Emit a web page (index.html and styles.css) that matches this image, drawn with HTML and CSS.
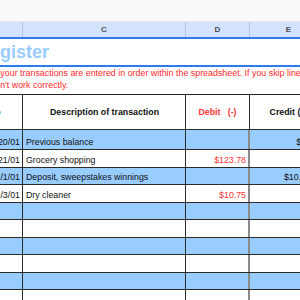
FILE: index.html
```html
<!DOCTYPE html>
<html>
<head>
<meta charset="utf-8">
<link rel="stylesheet" href="styles.css">
</head>
<body>
<div class="sheet">
  <div class="topbar"></div>
  <div class="colheads">
    <div class="ch">B</div>
    <div class="ch">C</div>
    <div class="ch">D</div>
    <div class="ch">E</div>
  </div>
  <div class="title-row"><span class="title">Register</span></div>
  <div class="note">
    <div class="note-line l1">Be sure your transactions are entered in order within the spreadsheet. If you skip lines, formulas</div>
    <div class="note-line l2">won't work correctly.</div>
  </div>
  <div class="table">
    <div class="row head">
      <div class="cell c-date">Date</div>
      <div class="cell c-desc">Description of transaction</div>
      <div class="cell c-debit"><span class="red">Debit&nbsp;&nbsp;&nbsp;(-)</span></div>
      <div class="cell c-credit">Credit (+)</div>
    </div>
    <div class="row alt first">
      <div class="cell c-date r">1/20/01</div>
      <div class="cell c-desc">Previous balance</div>
      <div class="cell c-debit r"></div>
      <div class="cell c-credit r">$500.00</div>
    </div>
    <div class="row">
      <div class="cell c-date r">1/21/01</div>
      <div class="cell c-desc">Grocery shopping</div>
      <div class="cell c-debit r red">$123.78</div>
      <div class="cell c-credit r"></div>
    </div>
    <div class="row alt">
      <div class="cell c-date r">2/1/01</div>
      <div class="cell c-desc">Deposit, sweepstakes winnings</div>
      <div class="cell c-debit r"></div>
      <div class="cell c-credit r">$10,000.00</div>
    </div>
    <div class="row">
      <div class="cell c-date r">2/3/01</div>
      <div class="cell c-desc">Dry cleaner</div>
      <div class="cell c-debit r red">$10.75</div>
      <div class="cell c-credit r"></div>
    </div>
    <div class="row alt"><div class="cell c-date"></div><div class="cell c-desc"></div><div class="cell c-debit"></div><div class="cell c-credit"></div></div>
    <div class="row"><div class="cell c-date"></div><div class="cell c-desc"></div><div class="cell c-debit"></div><div class="cell c-credit"></div></div>
    <div class="row alt"><div class="cell c-date"></div><div class="cell c-desc"></div><div class="cell c-debit"></div><div class="cell c-credit"></div></div>
    <div class="row"><div class="cell c-date"></div><div class="cell c-desc"></div><div class="cell c-debit"></div><div class="cell c-credit"></div></div>
    <div class="row alt"><div class="cell c-date"></div><div class="cell c-desc"></div><div class="cell c-debit"></div><div class="cell c-credit"></div></div>
    <div class="row"><div class="cell c-date"></div><div class="cell c-desc"></div><div class="cell c-debit"></div><div class="cell c-credit"></div></div>
  </div>
</div>
</body>
</html>
```

FILE: styles.css
```css
html, body {
  margin: 0;
  padding: 0;
  background: #ffffff;
  overflow: hidden;
}

body {
  font-family: "Liberation Sans", Arial, sans-serif;
  width: 300px;
  height: 300px;
}

.sheet {
  margin-left: -40px;
  width: 420px;
}

.topbar {
  height: 21px;
  background: #f8f9fa;
  border-bottom: 1px solid #e3e5e8;
}

.colheads {
  display: grid;
  grid-template-columns: 63px 163px 64px 78px 52px;
  height: 15px;
  background: #d3e3fd;
  border-bottom: 2px solid #2f7ce8;
}

.ch {
  box-sizing: border-box;
  border-right: 1px solid #b9c6dc;
  font-size: 8px;
  font-weight: bold;
  color: #4a4f57;
  text-align: center;
  line-height: 15px;
}

.title-row {
  height: 26px;
  border-bottom: 2px solid #2f7ce8;
  padding-left: 17px;
  white-space: nowrap;
  display: flex;
  align-items: center;
}

.title {
  font-size: 18px;
  font-weight: bold;
  color: #99ccff;
}

.note {
  height: 26px;
  padding-top: 1px;
  padding-left: 40px;
  color: #ff2a2a;
  font-size: 8.9px;
  line-height: 11.5px;
  white-space: nowrap;
}

.note-line.l1 {
  margin-left: -32.7px;
}

.note-line.l2 {
  margin-left: -11.2px;
}

.table {
  border-top: 1px solid #222;
}

.row {
  display: grid;
  grid-template-columns: 63px 163px 64px 81px;
  height: 17.5px;
  box-sizing: border-box;
  border-bottom: 1px solid #2b2b2b;
  font-size: 8.8px;
  color: #111;
}

.row.head {
  height: 35px;
  font-weight: bold;
}

.row.first {
  height: 20px;
}

.row.alt {
  background: #99ccff;
}

.cell {
  box-sizing: border-box;
  border-right: 1px solid #2b2b2b;
  padding: 0 2px;
  display: flex;
  align-items: flex-end;
  padding-bottom: 2px;
  white-space: nowrap;
  overflow: hidden;
}

.row.head .cell {
  align-items: center;
  justify-content: center;
  padding-bottom: 0;
}

.row.head .cell.c-credit {
  padding-right: 4px;
}

.cell.c-debit {
  border-right: 2px solid #8a8a8a;
}

.row.head .cell.c-debit {
  border-right-color: #2b2b2b;
  border-right-width: 1px;
}

.cell.r {
  justify-content: flex-end;
}

.cell.c-desc {
  padding-left: 3px;
}

.red {
  color: #ff3333;
}
```
